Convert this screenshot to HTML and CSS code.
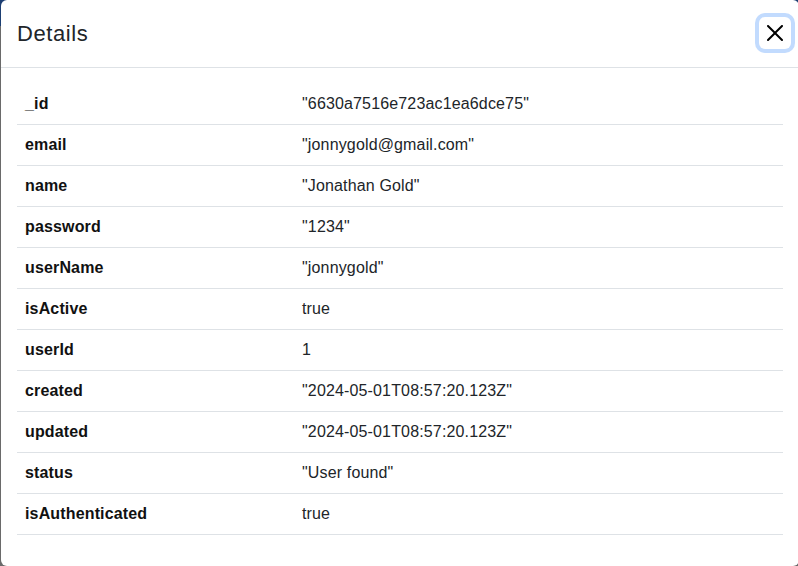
FILE: index.html
```html
<!DOCTYPE html>
<html lang="en">
<head>
<meta charset="utf-8">
<title>Details</title>
<link rel="stylesheet" href="styles.css">
</head>
<body>
<div class="backdrop">
  <div class="modal">
    <div class="modal-header">
      <h4 class="modal-title">Details</h4>
      <button class="btn-close" type="button" aria-label="Close">
        <svg width="16" height="16" viewBox="0 0 16 16" aria-hidden="true"><path fill="#000" d="M.293.293a1 1 0 0 1 1.414 0L8 6.586 14.293.293a1 1 0 1 1 1.414 1.414L9.414 8l6.293 6.293a1 1 0 0 1-1.414 1.414L8 9.414l-6.293 6.293a1 1 0 0 1-1.414-1.414L6.586 8 .293 1.707a1 1 0 0 1 0-1.414z"/></svg>
      </button>
    </div>
    <div class="modal-body">
      <table class="details">
        <tbody>
          <tr><th>_id</th><td>"6630a7516e723ac1ea6dce75"</td></tr>
          <tr><th>email</th><td>"jonnygold@gmail.com"</td></tr>
          <tr><th>name</th><td>"Jonathan Gold"</td></tr>
          <tr><th>password</th><td>"1234"</td></tr>
          <tr><th>userName</th><td>"jonnygold"</td></tr>
          <tr><th>isActive</th><td>true</td></tr>
          <tr><th>userId</th><td>1</td></tr>
          <tr><th>created</th><td>"2024-05-01T08:57:20.123Z"</td></tr>
          <tr><th>updated</th><td>"2024-05-01T08:57:20.123Z"</td></tr>
          <tr><th>status</th><td>"User found"</td></tr>
          <tr><th>isAuthenticated</th><td>true</td></tr>
        </tbody>
      </table>
    </div>
  </div>
</div>
</body>
</html>
```
FILE: styles.css
```css
html, body {
  margin: 0;
  padding: 0;
  overflow: hidden;
}
body {
  background: linear-gradient(#1d3f73 0, #1d3f73 26px, #6a6a6a 26px);
  font-family: "Liberation Sans", Arial, sans-serif;
  color: #212529;
  width: 798px;
  height: 566px;
}
.backdrop {
  width: 798px;
  height: 566px;
}
.modal {
  margin-left: 1px;
  width: 798px;
  height: 566px;
  background: #fff;
  border-radius: 6px;
  display: flex;
  flex-direction: column;
  overflow: hidden;
}
.modal-header {
  display: flex;
  align-items: center;
  padding: 17px 16px 16px;
  border-bottom: 1px solid #dee2e6;
}
.modal-title {
  margin: 0;
  font-size: 22px;
  line-height: 34px;
  font-weight: 400;
  letter-spacing: 0.6px;
  color: #212529;
}
.btn-close {
  box-sizing: content-box;
  width: 16px;
  height: 16px;
  padding: 8px;
  margin: -10px -8px -8px auto;
  border: 0;
  border-radius: 6px;
  background: transparent;
  box-shadow: 0 0 0 4px rgba(13, 110, 253, 0.25);
  display: flex;
  align-items: center;
  justify-content: center;
  cursor: pointer;
}
.btn-close svg {
  display: block;
}
.modal-body {
  padding: 16px;
}
.details {
  width: 100%;
  border-collapse: collapse;
  font-size: 16px;
  line-height: 24px;
  letter-spacing: 0.15px;
  margin-bottom: 16px;
}
.details th,
.details td {
  padding: 8px;
  border-bottom: 1px solid #dee2e6;
  text-align: left;
  vertical-align: top;
}
.details th {
  width: 261px;
  font-weight: 700;
  color: #111;
}
.details td {
  color: #212529;
}
```
